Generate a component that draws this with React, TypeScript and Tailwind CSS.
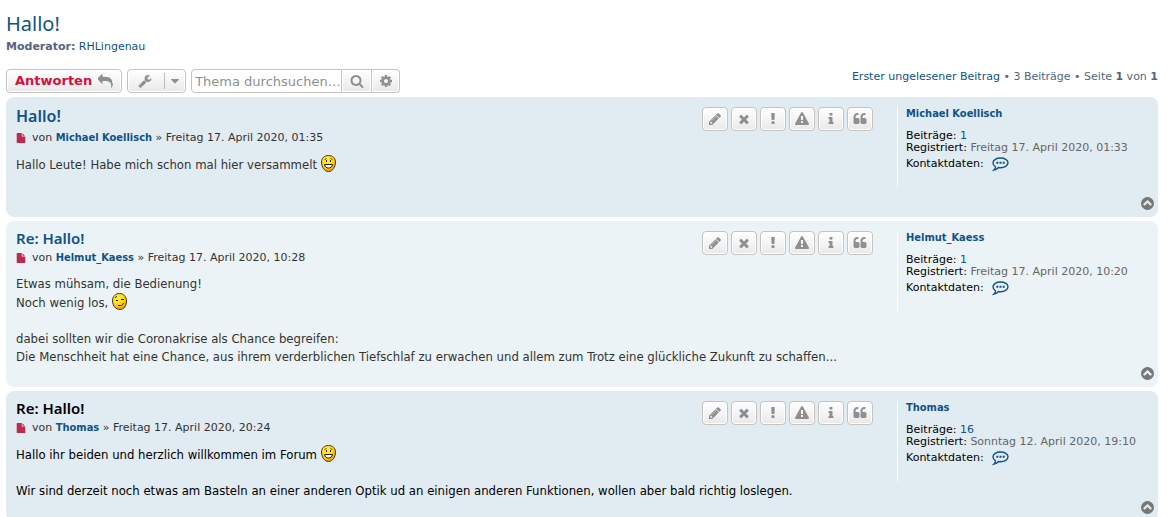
import React, { useState } from 'react';
import { clsx } from 'clsx';

// 1792 unit glyphs, drawn at 14px
const icons = {
  reply: 'M1792 1120q0 166-127 451-3 7-10.5 24t-13.5 30-13 22q-12 17-28 17-15 0-23.5-10t-8.5-25q0-9 2.5-26.5t2.5-23.5q5-68 5-123 0-112-19.5-200.5t-54-153.5-89-112-117.5-78.5-149.5-45-174-21.5-202.5-6h-224v256q0 26-19 45t-45 19-45-19l-512-512q-19-19-19-45t19-45l512-512q19-19 45-19t45 19 19 45v256h224q713 0 875 403 53 134 53 333z',
  wrench: 'M448 1472q0-26-19-45t-45-19-45 19-19 45 19 45 45 19 45-19 19-45zm644-420l-682 682q-37 37-90 37-52 0-91-37l-106-108q-38-36-38-90 0-53 38-91l681-681q39 98 114.5 173.5t173.5 114.5zm634-435q0 39-23 106-47 134-164.5 217.5t-258.5 83.5q-185 0-316.5-131.5t-131.5-316.5 131.5-316.5 316.5-131.5q58 0 121.5 16.5t107.5 46.5q16 11 16 28t-16 28l-293 169v224l193 107q5-3 79-48.5t135.5-81 70.5-35.5q15 0 23.5 10t8.5 25z',
  caret: 'M1408 704q0 26-19 45l-448 448q-19 19-45 19t-45-19l-448-448q-19-19-19-45t19-45 45-19h896q26 0 45 19t19 45z',
  search: 'M1216 832q0-185-131.5-316.5t-316.5-131.5-316.5 131.5-131.5 316.5 131.5 316.5 316.5 131.5 316.5-131.5 131.5-316.5zm512 832q0 52-38 90t-90 38q-54 0-90-38l-343-342q-179 124-399 124-143 0-273.5-55.5t-225-150-150-225-55.5-273.5 55.5-273.5 150-225 225-150 273.5-55.5 273.5 55.5 225 150 150 225 55.5 273.5q0 220-124 399l343 343q37 37 37 90z',
  cog: 'M1152 896q0-106-75-181t-181-75-181 75-75 181 75 181 181 75 181-75 75-181zm512-109v222q0 12-8 23t-20 13l-185 28q-19 54-39 91 35 50 107 138 10 12 10 25t-9 23q-27 37-99 108t-94 71q-12 0-26-9l-138-108q-44 23-91 38-16 136-29 186-7 28-36 28h-222q-14 0-24.5-8.5t-11.5-21.5l-28-184q-49-16-90-37l-141 107q-10 9-25 9-14 0-25-11-126-114-165-168-7-10-7-23 0-12 8-23 15-21 51-66.5t54-70.5q-27-50-41-99l-183-27q-13-2-21-12.5t-8-23.5v-222q0-12 8-23t19-13l186-28q14-46 39-92-40-57-107-138-10-12-10-24 0-10 9-23 26-36 98.5-107.5t94.5-71.5q13 0 26 10l138 107q44-23 91-38 16-136 29-186 7-28 36-28h222q14 0 24.5 8.5t11.5 21.5l28 184q49 16 90 37l142-107q9-9 24-9 13 0 25 10 129 119 165 170 7 8 7 22 0 12-8 23-15 21-51 66.5t-54 70.5q26 50 41 98l183 28q13 2 21 12.5t8 23.5z',
  pencil: 'M491 1536l91-91-235-235-91 91v107h128v128h107zm523-928q0-22-22-22-10 0-17 7l-542 542q-7 7-7 17 0 22 22 22 10 0 17-7l542-542q7-7 7-17zm-54-192l416 416-832 832h-416v-416zm683 96q0 53-37 90l-166 166-416-416 166-165q36-38 90-38 53 0 91 38l235 234q37 39 37 91z',
  times: 'M1490 1322q0 40-28 68l-136 136q-28 28-68 28t-68-28l-294-294-294 294q-28 28-68 28t-68-28l-136-136q-28-28-28-68t28-68l294-294-294-294q-28-28-28-68t28-68l136-136q28-28 68-28t68 28l294 294 294-294q28-28 68-28t68 28l136 136q28 28 28 68t-28 68l-294 294 294 294q28 28 28 68z',
  exclamation: 'M1088 1248v224q0 26-19 45t-45 19h-256q-26 0-45-19t-19-45v-224q0-26 19-45t45-19h256q26 0 45 19t19 45zm30-1056l-28 768q-1 26-20.5 45t-45.5 19h-256q-26 0-45.5-19t-20.5-45l-28-768q-1-26 17.5-45t44.5-19h320q26 0 44.5 19t17.5 45z',
  warning: 'M1024 1375v-190q0-14-9.5-23.5t-22.5-9.5h-192q-13 0-22.5 9.5t-9.5 23.5v190q0 14 9.5 23.5t22.5 9.5h192q13 0 22.5-9.5t9.5-23.5zm-2-374l18-459q0-12-10-19-13-11-24-11h-220q-11 0-24 11-10 7-10 21l17 457q0 10 10 16.5t24 6.5h185q14 0 23.5-6.5t10.5-16.5zm-14-934l768 1408q35 63-2 126-17 29-46.5 46t-63.5 17h-1536q-34 0-63.5-17t-46.5-46q-37-63-2-126l768-1408q17-31 47-49t65-18 65 18 47 49z',
  info: 'M1216 1344v128q0 26-19 45t-45 19h-512q-26 0-45-19t-19-45v-128q0-26 19-45t45-19h64v-384h-64q-26 0-45-19t-19-45v-128q0-26 19-45t45-19h384q26 0 45 19t19 45v576h64q26 0 45 19t19 45zm-128-1152v192q0 26-19 45t-45 19h-256q-26 0-45-19t-19-45v-192q0-26 19-45t45-19h256q26 0 45 19t19 45z',
  quote: 'M832 960v384q0 80-56 136t-136 56h-384q-80 0-136-56t-56-136v-704q0-104 40.5-198.5t109.5-163.5 163.5-109.5 198.5-40.5h64q26 0 45 19t19 45v128q0 26-19 45t-45 19h-64q-106 0-181 75t-75 181v32q0 40 28 68t68 28h224q80 0 136 56t56 136zm896 0v384q0 80-56 136t-136 56h-384q-80 0-136-56t-56-136v-704q0-104 40.5-198.5t109.5-163.5 163.5-109.5 198.5-40.5h64q26 0 45 19t19 45v128q0 26-19 45t-45 19h-64q-106 0-181 75t-75 181v32q0 40 28 68t68 28h224q80 0 136 56t56 136z',
  up: 'M1293 1139l102-102q19-19 19-45t-19-45l-454-454q-19-19-45-19t-45 19l-454 454q-19 19-19 45t19 45l102 102q19 19 45 19t45-19l307-307 307 307q19 19 45 19t45-19zm371-243q0 209-103 385.5t-279.5 279.5-385.5 103-385.5-103-279.5-279.5-103-385.5 103-385.5 279.5-279.5 385.5-103 385.5 103 279.5 279.5 103 385.5z',
  file: 'M1152 512v-472q22 14 36 28l408 408q14 14 28 36h-472zm-128 32q0 40 28 68t68 28h544v1056q0 40-28 68t-68 28h-1344q-40 0-68-28t-28-68v-1600q0-40 28-68t68-28h800v544z',
};

type IconName = keyof typeof icons;

const Icon: React.FC<{ name: IconName; className?: string }> = ({ name, className }) => (
  <svg viewBox="0 0 1792 1792" aria-hidden="true" className={clsx('shrink-0 fill-current', className ?? 'size-3.5')}>
    <path d={icons[name]} />
  </svg>
);

const Smiley: React.FC<{ wink?: boolean }> = ({ wink }) => (
  <svg viewBox="0 0 15 17" role="img" aria-label={wink ? ';)' : ':D'} className="inline-block h-[17px] w-[15px] align-text-bottom">
    <defs>
      <radialGradient id="smileyFace" cx="40%" cy="30%" r="75%">
        <stop offset="0" stopColor="#fff34a" />
        <stop offset="0.55" stopColor="#ffd516" />
        <stop offset="1" stopColor="#f08c00" />
      </radialGradient>
    </defs>
    {wink ? (
      <>
        <path d="M7.5.5c4 0 7 3 7 7.500s-2.500 8.500-6.500 8.500-7.500-3.500-7.500-8.500 3-7.500 7-7.500z" fill="url(#smileyFace)" stroke="#4a3a10" />
        <path d="M3 4.500l2-1M4 7.500h2M9 6.500h3" fill="none" stroke="#2b2000" />
        <path d="M6 12.500h2.500c1.500 0 2.500-1 3-2.500" fill="none" stroke="#2b2000" />
      </>
    ) : (
      <>
        <path d="M7.500.5c4 0 7 2.500 7 6.500 0 5-3 9.500-7 9.500s-7-4.500-7-9.500c0-4 3-6.500 7-6.500z" fill="url(#smileyFace)" stroke="#4a3a10" />
        <path d="M3.500 4.500l2-1M9.500 3.500l2 1" fill="none" stroke="#6b5200" />
        <path d="M5 5h1v2h-1zM9 5h1v2h-1z" fill="#2b2000" />
        <path d="M3.500 9.500h8c-.5 2.500-2 3.500-4 3.500s-3.500-1-4-3.500z" fill="#fff" stroke="#2b2000" />
      </>
    )}
  </svg>
);

const ContactIcon = () => (
  <svg viewBox="0 0 17 15" aria-hidden="true" className="h-[15px] w-[17px]">
    <path
      d="M8.500 1c4 0 7.500 1.900 7.500 4.800s-3.500 4.900-7.500 4.900c-.7 0-1.400-.1-2-.2-.9 1.200-2.300 2.200-4.500 2.600.9-.9 1.500-2 1.500-3.300C1.900 8.900 1 7.500 1 5.800 1 2.900 4.500 1 8.500 1z"
      fill="none"
      stroke="#105289"
      strokeWidth="1.400"
    />
    <path d="M4.300 4.800h2v2h-2zM7.500 4.800h2v2h-2zM10.700 4.800h2v2h-2z" fill="#105289" />
  </svg>
);

const buttonStyle =
  'flex h-6 items-center justify-center border border-[#c7c3bf] bg-linear-to-b from-white to-[#e9e9e9] text-[#8f8f8f] shadow-[inset_0_0_0_1px_#fff] hover:text-[#0a8ed0]';

const authorStyle = "font-['DejaVu_Sans_Condensed','DejaVu_Sans',sans-serif] font-bold text-[#105289]";

const tools: { icon: IconName; title: string }[] = [
  { icon: 'pencil', title: 'Beitrag ändern' },
  { icon: 'times', title: 'Beitrag löschen' },
  { icon: 'exclamation', title: 'Beitrag melden' },
  { icon: 'warning', title: 'Benutzer verwarnen' },
  { icon: 'info', title: 'Informationen' },
  { icon: 'quote', title: 'Mit Zitat antworten' },
];

interface Post {
  title: string;
  author: string;
  date: string;
  posts: number;
  registered: string;
  body: React.ReactNode;
}

const posts: Post[] = [
  {
    title: 'Hallo!',
    author: 'Michael Koellisch',
    date: 'Freitag 17. April 2020, 01:35',
    posts: 1,
    registered: 'Freitag 17. April 2020, 01:33',
    body: <p>Hallo Leute! Habe mich schon mal hier versammelt <Smiley /></p>,
  },
  {
    title: 'Re: Hallo!',
    author: 'Helmut_Kaess',
    date: 'Freitag 17. April 2020, 10:28',
    posts: 1,
    registered: 'Freitag 17. April 2020, 10:20',
    body: (
      <>
        <p>Etwas mühsam, die Bedienung!</p>
        <p>Noch wenig los, <Smiley wink /></p>
        <p className="mt-[18px]">dabei sollten wir die Coronakrise als Chance begreifen:</p>
        <p>Die Menschheit hat eine Chance, aus ihrem verderblichen Tiefschlaf zu erwachen und allem zum Trotz eine glückliche Zukunft zu schaffen...</p>
      </>
    ),
  },
  {
    title: 'Re: Hallo!',
    author: 'Thomas',
    date: 'Freitag 17. April 2020, 20:24',
    posts: 16,
    registered: 'Sonntag 12. April 2020, 19:10',
    body: (
      <>
        <p>Hallo ihr beiden und herzlich willkommen im Forum <Smiley /></p>
        <p className="mt-[18px]">Wir sind derzeit noch etwas am Basteln an einer anderen Optik ud an einigen anderen Funktionen, wollen aber bald richtig loslegen.</p>
      </>
    ),
  },
];

const PostCard: React.FC<{ post: Post; index: number }> = ({ post, index }) => {
  const active = index === 2;

  return (
    <article className={clsx('flex rounded-lg pl-2.5', index % 2 ? 'bg-[#ebf3f6]' : 'bg-[#e1ebf2]')}>
      <div className="min-w-0 flex-1 pt-[7px] pr-6 pb-[21px]">
        <div className="flex items-start justify-between">
          <div>
            <h3
              className={clsx(
                "font-['Noto_Sans',sans-serif] font-semibold",
                index === 0 ? 'text-base leading-6' : 'text-[15px] leading-5',
                active ? 'text-black' : 'text-[#105289]'
              )}
            >
              <a href="#post" className="hover:underline">{post.title}</a>
            </h3>
            <p className="flex items-center text-[11px] leading-5 text-[#333]">
              <Icon name="file" className="mr-1.5 size-2.5 text-[#bc2a4d]" />
              <span>
                von <a href="#user" className={authorStyle}>{post.author}</a> » {post.date}
              </span>
            </p>
          </div>
          <ul className="flex gap-[3px] pt-[3px]">
            {tools.map((tool) => (
              <li key={tool.icon}>
                <button type="button" title={tool.title} className={clsx(buttonStyle, 'w-[26px] rounded')}>
                  <Icon name={tool.icon} />
                </button>
              </li>
            ))}
          </ul>
        </div>
        <div
          className={clsx(
            "mt-[7px] font-['DejaVu_Sans_Condensed','DejaVu_Sans',sans-serif] text-[13px] leading-[18px]",
            active ? 'text-black' : 'text-[#333]'
          )}
        >
          {post.body}
        </div>
      </div>

      <div className="flex w-[261px] shrink-0 flex-col pt-2.5 pb-1.5">
        <dl className="min-h-20 border-l border-white pt-px pl-2 text-[11px] leading-3 text-black">
          <dt className="mb-2.5">
            <a href="#user" className={authorStyle}>{post.author}</a>
          </dt>
          <dd>Beiträge: <a href="#posts" className="text-[#105289]">{post.posts}</a></dd>
          <dd>Registriert: <span className="text-[#666]">{post.registered}</span></dd>
          <dd className="flex h-5 items-center gap-2">
            Kontaktdaten:
            <a href="#contact" title="Kontaktdaten"><ContactIcon /></a>
          </dd>
        </dl>
        <a href="#top" title="Nach oben" className="mt-auto mr-[3px] self-end pt-[9px] text-[#777]">
          <Icon name="up" className="size-[15px]" />
        </a>
      </div>
    </article>
  );
};

const App = () => {
  const [query, setQuery] = useState('');

  return (
    <main className="bg-white pt-3 pr-3.5 pb-3 pl-1.5 font-['DejaVu_Sans',Verdana,sans-serif] text-[11px] text-[#536482]">
      <h2 className="font-['Noto_Sans',sans-serif] text-xl leading-6 text-[#105289]">
        <a href="#topic">Hallo!</a>
      </h2>
      <p className="mt-[3px] leading-4">
        <strong>Moderator:</strong> <a href="#user" className="text-[#105289]">RHLingenau</a>
      </p>

      <div className="mt-3.5 mb-1 flex items-start justify-between">
        <div className="flex gap-[5px]">
          <button type="button" className={clsx(buttonStyle, 'gap-1.5 rounded px-2 text-[13px] font-bold')}>
            <span className="text-[#d31141]">Antworten</span>
            <Icon name="reply" className="size-[15px]" />
          </button>
          <button type="button" title="Themen-Optionen" className={clsx(buttonStyle, 'rounded pl-2.5')}>
            <Icon name="wrench" />
            <span className="ml-3 flex h-4 items-center border-l border-[#b9b9b9] px-[3px]">
              <Icon name="caret" />
            </span>
          </button>
          <form className="flex" onSubmit={(e) => e.preventDefault()}>
            <input
              type="text"
              aria-label="Thema durchsuchen"
              placeholder="Thema durchsuchen…"
              value={query}
              onChange={(e) => setQuery(e.target.value)}
              className="h-6 w-[151px] rounded-l border border-[#c7c3bf] pl-[3px] text-[13px] text-[#333] placeholder:text-[#8f8f8f] focus:outline-none"
            />
            <button type="submit" title="Suche" className={clsx(buttonStyle, 'w-[30px] border-l-0')}>
              <Icon name="search" />
            </button>
            <button type="button" title="Erweiterte Suche" className={clsx(buttonStyle, 'w-7 rounded-r border-l-0')}>
              <Icon name="cog" />
            </button>
          </form>
        </div>
        <p className="leading-4">
          <a href="#unread" className="text-[#105289]">Erster ungelesener Beitrag</a> • 3 Beiträge • Seite <strong>1</strong> von <strong>1</strong>
        </p>
      </div>

      <div className="flex flex-col gap-1">
        {posts.map((post, i) => (
          <PostCard key={post.author} post={post} index={i} />
        ))}
      </div>
    </main>
  );
};

export default App;
